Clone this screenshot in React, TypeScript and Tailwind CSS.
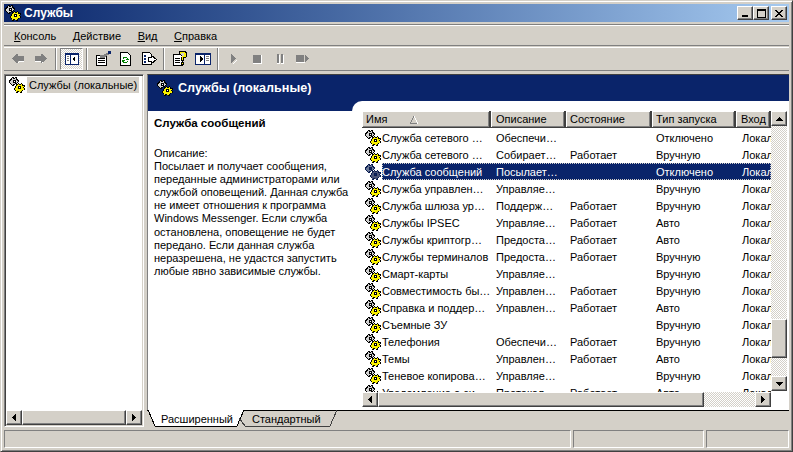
import React from "react";

const R3 = "border border-t-[#ffffff] border-l-[#ffffff] border-r-[#404040] border-b-[#404040] shadow-[inset_-1px_-1px_0_#808080,inset_1px_1px_0_#d4d0c8]";

function Gear({ dim = false, size = 16 }: { dim?: boolean; size?: number }) {
  const y = dim ? "#4a5478" : "#f8f000";
  const g = dim ? "#6a7896" : "#d0d0d0";
  const k = dim ? "#0a1c50" : "#000000";
  return (
    <svg width={size} height={size} viewBox="0 0 16 16" shapeRendering="crispEdges" className="shrink-0">
      <path fill={k} d="M3 0h2v1h1V0h2v2h1v1h1v2H9v1H8v1H6v1H5v1H3V8H2V7H1V6H0V3h1V2h1V1h1z" />
      <path fill={g} d="M3 1h1v1h2V1h1v2h1v1h1v1H8v1H6v1H4v1H3V7H2V6H1V4h1V3h1z" />
      <path fill={k} d="M4 3h3v3H4z" />
      <path fill={dim ? "#0a246a" : "#fff"} d="M5 4h1v1H5z" />
      <path fill={k} d="M9 6h1v1h2V6h1v1h1v1h2v2h-1v1h1v2h-2v1h-1v2h-2v-1H9v1H7v-2H6v-1H5v-2h1V9h1V7h2z" />
      <path fill={y} d="M9 7h1v1h2V7h1v2h2v1h-1v1h1v2h-2v1h-1v1h-2v-1H8v1H7v-2H6v-2h1V9h1V8h1z" />
      <path fill={k} d="M9 9h3v3H9z" />
      <path fill={dim ? "#0a246a" : "#fff"} d="M10 10h1v1h-1z" />
    </svg>
  );
}

function Tri({ dir }: { dir: "l" | "r" | "u" | "d" }) {
  const d = { l: "M5 0v7L1 3.5z", r: "M1 0v7l4-3.5z", u: "M0 5h7L3.5 1z", d: "M0 1h7L3.5 5z" }[dir];
  const vb = dir === "l" || dir === "r" ? "0 0 6 7" : "0 0 7 6";
  return (
    <svg width={dir === "l" || dir === "r" ? 6 : 7} height={dir === "l" || dir === "r" ? 7 : 6} viewBox={vb} shapeRendering="crispEdges">
      <path d={d} fill="#000" />
    </svg>
  );
}

const dither = "bg-[repeating-conic-gradient(#d4d0c8_0_25%,#ffffff_0_50%)] bg-[length:2px_2px]";

function SBtn({ dir }: { dir: "l" | "r" | "u" | "d" }) {
  return (
    <div className={`flex h-[15px] w-4 shrink-0 items-center justify-center bg-[#d4d0c8] ${R3}`}>
      <Tri dir={dir} />
    </div>
  );
}

function Sep() {
  return <div className="mx-[3px] h-[22px] w-[2px] shrink-0 border-l border-r border-l-[#808080] border-r-white" />;
}

function Tb({ children, active = false }: { children?: React.ReactNode; active?: boolean }) {
  return (
    <div className={`flex h-[22px] w-[23px] shrink-0 items-center justify-center ${active ? `border border-t-[#808080] border-l-[#808080] border-r-white border-b-white ${dither}` : ""}`}>
      {children}
    </div>
  );
}

const S = { width: 16, height: 16, viewBox: "0 0 16 16", shapeRendering: "crispEdges" as const };

const Back = () => (
  <svg {...S}><path fill="#808080" d="M7 3h1v2h6v5H8v2H7L2 8V7z" /><path fill="#fff" d="M8 11h1v1H8zM9 10h5v1H9z" /></svg>
);
const Fwd = () => (
  <svg {...S}><path fill="#808080" d="M8 3h1l5 4v1l-5 4H8v-2H2V5h6z" /><path fill="#fff" d="M2 10h6v1H2zM9 11h1v1H9z" /></svg>
);
const PanelIcon = () => (
  <svg {...S}>
    <path fill="#0a246a" d="M1 2h14v12H1z" />
    <path fill="#fff" d="M2 4h12v9H2z" />
    <path fill="#0a246a" d="M6 3h1v10H6z" />
    <path fill="#808080" d="M3 5h2v1H3zM3 7h2v1H3zM3 9h2v1H3z" />
    <path fill="#000" d="M11 5v6L8 8z" />
  </svg>
);
const Props = () => (
  <svg {...S}>
    <path fill="#fff" stroke="#000" d="M1.5 4.5h10v10h-10z" />
    <path fill="#000" d="M3 7h7v1H3zM3 9h7v1H3zM3 11h7v1H3z" />
    <path fill="#808080" d="M5 4h4V3h2V2h2V1h1v3h-2v1l-3 2H5z" />
    <path fill="#0a246a" d="M13 0h3v3h-3z" />
  </svg>
);
const Refresh = () => (
  <svg {...S}>
    <path fill="#fff" stroke="#000" d="M2.5 1.5h7l3 3v10h-10z" />
    <path fill="#008000" d="M5 6h4v1h1v1h1v1H8V8h1V7H6v1H5zM4 9h3v1H6v1h3v-1h1v1H9v1H5v-1H4z" />
  </svg>
);
const Export = () => (
  <svg {...S}>
    <path fill="#fff" stroke="#000" d="M1.5 1.5h7l2 2v10h-9z" />
    <path fill="#0a246a" d="M3 4h2v2H3zM3 7h2v2H3zM3 10h2v2H3z" />
    <path fill="#fff" stroke="#000" d="M7.5 6.5h3v-2l5 4-5 4v-2h-3z" />
  </svg>
);
const Help = () => (
  <svg {...S}>
    <path fill="#fff" stroke="#000" d="M1.5 3.5h7l2 2v9h-9z" />
    <path fill="#000" d="M3 7h5v1H3zM3 9h5v1H3zM3 11h5v1H3z" />
    <path fill="#000" d="M7 0h7v1h1v5h-1v1h-2v3H9V6h3V2H9v2H7V1z" />
    <path fill="#f8f000" d="M8 1h5v1h1v4h-1v0h-2v3h-1V5h2V2H9v1H8z" />
    <path fill="#000" d="M9 11h3v3H9z" />
    <path fill="#f8f000" d="M10 12h1v1h-1z" />
  </svg>
);
const PanelRight = () => (
  <svg {...S}>
    <path fill="#0a246a" d="M0 2h16v12H0z" />
    <path fill="#fff" d="M1 4h14v9H1z" />
    <path fill="#0a246a" d="M9 3h1v10H9z" />
    <path fill="#808080" d="M11 5h3v1h-3zM11 7h3v1h-3zM11 9h3v1h-3z" />
    <path fill="#000" d="M5 5v6l3-3z" />
  </svg>
);
const Play = () => (
  <svg {...S}><path fill="#808080" d="M5 3h1v1h1v1h1v1h1v1h1v1H9v1H8v1H7v1H6v1H5z" /><path fill="#fff" d="M6 13h1v-1h1v-1h1v-1h1V9h1v1h-1v1H9v1H8v1H6z" /></svg>
);
const Stop = () => (
  <svg {...S}><path fill="#808080" d="M4 4h8v8H4z" /><path fill="#fff" d="M4 12h9v1H4zM12 4h1v8h-1z" /></svg>
);
const Pause = () => (
  <svg {...S}><path fill="#808080" d="M5 3h2v9H5zM9 3h2v9H9z" /><path fill="#fff" d="M5 12h3v1H5zM9 12h3v1H9zM7 4h1v8H7zM11 4h1v8h-1z" /></svg>
);
const Restart = () => (
  <svg {...S}><path fill="#808080" d="M1 4h8v7H1zM10 4l4 3.5-4 3.5z" /><path fill="#fff" d="M1 11h9v1H1z" /></svg>
);

const rows: [string, string, string, string, string][] = [
  ["Служба сетевого …", "Обеспечи…", "", "Отключено", "Локал"],
  ["Служба сетевого …", "Собирает…", "Работает", "Вручную", "Локал"],
  ["Служба сообщений", "Посылает…", "", "Отключено", "Локал"],
  ["Служба управлен…", "Управляе…", "", "Вручную", "Локал"],
  ["Служба шлюза ур…", "Поддерж…", "Работает", "Вручную", "Локал"],
  ["Службы IPSEC", "Управляе…", "Работает", "Авто", "Локал"],
  ["Службы криптогр…", "Предоста…", "Работает", "Авто", "Локал"],
  ["Службы терминалов", "Предоста…", "Работает", "Вручную", "Локал"],
  ["Смарт-карты", "Управляе…", "", "Вручную", "Локал"],
  ["Совместимость бы…", "Управлен…", "Работает", "Вручную", "Локал"],
  ["Справка и поддер…", "Управлен…", "Работает", "Авто", "Локал"],
  ["Съемные ЗУ", "", "", "Вручную", "Локал"],
  ["Телефония", "Обеспечи…", "Работает", "Вручную", "Локал"],
  ["Темы", "Управлен…", "Работает", "Авто", "Локал"],
  ["Теневое копирова…", "Управляе…", "", "Вручную", "Локал"],
  ["Уведомление о си…", "Протокол…", "Работает", "Авто", "Локал"],
];

const desc = [
  "Описание:",
  "Посылает и получает сообщения,",
  "переданные администраторами или",
  "службой оповещений. Данная служба",
  "не имеет отношения к программа",
  "Windows Messenger. Если служба",
  "остановлена, оповещение не будет",
  "передано. Если данная служба",
  "неразрешена, не удастся запустить",
  "любые явно зависимые службы.",
];

const cols = ["w-[129px]", "w-[75px]", "w-[86px]", "w-[84px]", "w-[35px]"];
const pads = ["", "pl-[5px]", "pl-[4px]", "pl-[4px]", "pl-[6px]"];

function Head({ w, pad = "pl-[4px]", children }: { w: string; pad?: string; children: React.ReactNode }) {
  return (
    <div className={`${w} ${pad} flex h-[17px] shrink-0 items-center overflow-hidden whitespace-nowrap border-r-2 border-b border-r-[#404040] border-b-[#404040] bg-[#d4d0c8] pt-[1px] shadow-[inset_1px_1px_0_#fff,inset_-1px_-1px_0_#808080]`}>
      {children}
    </div>
  );
}

function Cell({ w, pad, children, sel = false }: { w: string; pad: string; children?: React.ReactNode; sel?: boolean }) {
  return (
    <div className={`${w} ${pad} h-[17px] shrink-0 overflow-hidden whitespace-nowrap pt-[1px] leading-[17px] ${sel ? "bg-[#0a246a] text-white" : ""}`}>
      {children}
    </div>
  );
}

export default function App() {
  return (
    <div className="flex h-[452px] w-[793px] flex-col overflow-hidden border border-b-[#404040] border-l-[#d4d0c8] border-r-[#404040] border-t-[#d4d0c8] bg-[#d4d0c8] font-['Liberation_Sans',sans-serif] text-[11px] text-black shadow-[inset_1px_1px_0_#fff,inset_-1px_-1px_0_#808080]">
      <div className="flex min-h-0 flex-1 flex-col p-[3px]">
        <div className="flex h-[18px] shrink-0 items-center bg-gradient-to-r from-[#0a246a] to-[#a6caf0] pl-[1px] pr-[2px]">
          <Gear size={16} />
          <span className="ml-[3px] flex-1 text-[12px] font-bold text-white">Службы</span>
          <div className={`flex h-[14px] w-4 items-end justify-center bg-[#d4d0c8] pb-[2px] ${R3}`}><div className="h-[2px] w-[6px] bg-black" /></div>
          <div className={`flex h-[14px] w-4 items-center justify-center bg-[#d4d0c8] ${R3}`}><div className="h-[9px] w-[9px] border border-t-2 border-black" /></div>
          <div className={`ml-[2px] flex h-[14px] w-4 items-center justify-center bg-[#d4d0c8] ${R3}`}>
            <svg width="8" height="7" viewBox="0 0 8 7" shapeRendering="crispEdges"><path d="M0 0h2v1h1v1h2V1h1V0h2v1H7v1H6v1H5v1h1v1h1v1h1v1H6V6H5V5H3v1H2v1H0V6h1V5h1V4h1V3H2V2H1V1H0z" fill="#000" /></svg>
          </div>
        </div>

        <div className="mt-[2px] flex h-[22px] shrink-0 items-center gap-[16.5px] border-b border-t border-b-[#808080] border-t-[#808080] pl-[10px] pt-[2px] shadow-[inset_0_1px_0_#fff]">
          <span><u>К</u>онсоль</span>
          <span><u>Д</u>ействие</span>
          <span><u>В</u>ид</span>
          <span><u>С</u>правка</span>
        </div>

        <div className="mt-[1px] flex h-[24px] shrink-0 items-center border-b border-b-[#808080] pl-[2px] shadow-[inset_0_1px_0_#fff]">
          <Tb><Back /></Tb>
          <Tb><Fwd /></Tb>
          <Sep />
          <Tb active><PanelIcon /></Tb>
          <Sep />
          <Tb><Props /></Tb>
          <Tb><Refresh /></Tb>
          <Tb><Export /></Tb>
          <Sep />
          <Tb><Help /></Tb>
          <Tb><PanelRight /></Tb>
          <Sep />
          <Tb><Play /></Tb>
          <Tb><Stop /></Tb>
          <Tb><Pause /></Tb>
          <Tb><Restart /></Tb>
        </div>

        <div className="mt-[3px] flex min-h-0 flex-1">
          {/* left pane */}
          <div className="flex h-[353px] w-[140px] shrink-0 flex-col border border-b-white border-l-[#808080] border-r-white border-t-[#808080] bg-white shadow-[inset_1px_1px_0_#404040,inset_-1px_-1px_0_#d4d0c8]">
            <div className="min-h-0 flex-1 pl-[4px] pt-[2px]">
              <div className="flex h-[16px] items-center">
                <Gear />
                <span className="ml-[2px] flex h-[16px] items-center whitespace-nowrap bg-[#d4d0c8] px-[2px]">Службы (локальные)</span>
              </div>
            </div>
            <div className="mx-[1px] mb-[1px] flex h-[15px] shrink-0">
              <SBtn dir="l" />
              <div className={`flex-1 bg-[#d4d0c8] ${R3}`} />
              <SBtn dir="r" />
            </div>
          </div>

          {/* right pane */}
          <div className="ml-[3px] flex min-w-0 flex-1 flex-col">
            <div className="flex h-[336px] shrink-0 flex-col border-l border-t border-l-[#808080] border-t-[#404040] bg-white">
              <div className="flex h-[26px] shrink-0 items-center bg-[#0a246a] pl-[9px]">
                <Gear />
                <span className="ml-[5px] text-[12.6px] font-bold text-white">Службы (локальные)</span>
              </div>
              <div className="flex min-h-0 flex-1">
                <div className="flex w-[204px] shrink-0 flex-col">
                  <div className="h-[10px] shrink-0 bg-[#0a246a]" />
                  <div className="pl-[6px] pt-[6px]">
                    <div className="text-[11.5px] font-bold leading-[13px]">Служба сообщений</div>
                    <div className="mt-[17px] whitespace-nowrap leading-[13.1px]">
                      {desc.map((t, i) => (
                        <div key={i}>{t}</div>
                      ))}
                    </div>
                  </div>
                </div>
                <div className="relative min-w-0 flex-1 pt-[10px]">
                  <div className="absolute left-0 top-0 h-[10px] w-[10px] bg-[#0a246a]">
                    <div className="h-full w-full rounded-tl-[10px] bg-white" />
                  </div>
                  <div className="ml-[10px] flex">
                    <div className="flex h-[281px] w-[409px] shrink-0 flex-col overflow-hidden">
                      <div className="flex shrink-0">
                        <Head w={cols[0]}>Имя<svg className="ml-[22px]" width="10" height="8" viewBox="0 0 10 8" shapeRendering="crispEdges"><path fill="none" stroke="#808080" d="M1 7.5h8M5 .5L1 7.5"/><path fill="none" stroke="#fff" d="M5 .5l4 7"/></svg></Head>
                        <Head w={cols[1]} pad="pl-[5px]">Описание</Head>
                        <Head w={cols[2]}>Состояние</Head>
                        <Head w={cols[3]}>Тип запуска</Head>
                        <Head w={cols[4]} pad="pl-[5px]">Вход от имени</Head>
                      </div>
                      <div className="pt-[1px]">
                        {rows.map((r, i) => {
                          const sel = i === 2;
                          return (
                            <div key={i} className="relative flex h-[17px]">
                              <div className={`${cols[0]} flex shrink-0 items-center overflow-hidden whitespace-nowrap pl-[3px]`}>
                                <Gear dim={sel} />
                                <span className={`ml-[1px] block h-[17px] flex-1 pt-[1px] leading-[17px] ${sel ? "bg-[#0a246a] text-white" : ""}`}>{r[0]}</span>
                              </div>
                              <Cell w={cols[1]} pad={pads[1]} sel={sel}>{r[1]}</Cell>
                              <Cell w={cols[2]} pad={pads[2]} sel={sel}>{r[2]}</Cell>
                              <Cell w={cols[3]} pad={pads[3]} sel={sel}>{r[3]}</Cell>
                              <Cell w={cols[4]} pad={pads[4]} sel={sel}>{r[4]}</Cell>
                              {sel && <div className="pointer-events-none absolute bottom-0 left-[20px] right-0 top-0 border border-dotted border-[#d4d0c8]" />}
                            </div>
                          );
                        })}
                      </div>
                    </div>
                    <div className="flex h-[280px] w-[16px] shrink-0 flex-col">
                      <SBtn dir="u" />
                      <div className={`h-[193px] shrink-0 ${dither}`} />
                      <div className={`h-[39px] shrink-0 bg-[#d4d0c8] ${R3}`} />
                      <div className={`flex-1 ${dither}`} />
                      <SBtn dir="d" />
                    </div>
                  </div>
                  <div className="ml-[10px] flex h-[15px] w-[409px]">
                    <SBtn dir="l" />
                    <div className={`w-[326px] bg-[#d4d0c8] ${R3}`} />
                    <div className={`flex-1 ${dither}`} />
                    <SBtn dir="r" />
                  </div>
                </div>
              </div>
            </div>
            {/* tabs */}
            <div className="relative flex h-[18px] shrink-0 items-center gap-[19px] border-t border-t-black pb-[1px] pl-[14px]">
              <svg className="absolute left-0 top-[-2px]" width="200" height="20" viewBox="0 0 200 20" shapeRendering="crispEdges">
                <path fill="#fff" d="M1 0h96v2h-1l-6 15H8z" />
                <path fill="none" stroke="#000" d="M1 1l7 16h82l7-16" />
                <path fill="none" stroke="#404040" d="M92 9l6 8h85l7-16" />
              </svg>
              <span className="relative">Расширенный</span>
              <span className="relative">Стандартный</span>
            </div>
          </div>
        </div>

        <div className="flex h-[18px] shrink-0 gap-[2px]">
          {["flex-1", "w-[131px]", "w-[83px]"].map((w, i) => (
            <div key={i} className={`${w} border border-b-white border-l-[#808080] border-r-white border-t-[#808080]`} />
          ))}
        </div>
      </div>
    </div>
  );
}
